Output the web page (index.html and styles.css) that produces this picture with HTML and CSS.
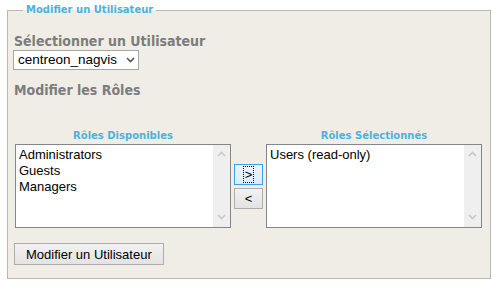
FILE: index.html
```html
<!DOCTYPE html>
<html lang="fr">

<head>
    <meta charset="UTF-8">
    <title>Modifier un Utilisateur</title>
    <link rel="stylesheet" href="styles.css">
</head>

<body>
    <fieldset class="panel">
        <legend>Modifier un Utilisateur</legend>

        <h3 class="section-title">Sélectionner un Utilisateur</h3>
        <div class="user-select">
            <span class="select-value">centreon_nagvis</span>
            <svg class="chevron" width="9" height="6" viewBox="0 0 9 6"><path d="M1 1 L4.5 4.5 L8 1" fill="none" stroke="#555" stroke-width="1.6"/></svg>
        </div>

        <h3 class="section-title roles-title">Modifier les Rôles</h3>

        <div class="roles">
            <div class="role-col">
                <div class="role-label">Rôles Disponibles</div>
                <div class="listbox">
                    <ul class="items">
                        <li>Administrators</li>
                        <li>Guests</li>
                        <li>Managers</li>
                    </ul>
                    <div class="scrollbar">
                        <svg width="9" height="6" viewBox="0 0 9 6"><path d="M1 5 L4.5 1.5 L8 5" fill="none" stroke="#c8c8c8" stroke-width="1.6"/></svg>
                        <svg width="9" height="6" viewBox="0 0 9 6"><path d="M1 1 L4.5 4.5 L8 1" fill="none" stroke="#c8c8c8" stroke-width="1.6"/></svg>
                    </div>
                </div>
            </div>

            <div class="move-buttons">
                <button class="move focused"><span>&gt;</span></button>
                <button class="move"><span>&lt;</span></button>
            </div>

            <div class="role-col">
                <div class="role-label">Rôles Sélectionnés</div>
                <div class="listbox">
                    <ul class="items">
                        <li>Users (read-only)</li>
                    </ul>
                    <div class="scrollbar">
                        <svg width="9" height="6" viewBox="0 0 9 6"><path d="M1 5 L4.5 1.5 L8 5" fill="none" stroke="#c8c8c8" stroke-width="1.6"/></svg>
                        <svg width="9" height="6" viewBox="0 0 9 6"><path d="M1 1 L4.5 4.5 L8 1" fill="none" stroke="#c8c8c8" stroke-width="1.6"/></svg>
                    </div>
                </div>
            </div>
        </div>

        <button class="submit">Modifier un Utilisateur</button>
    </fieldset>
</body>

</html>
```

FILE: styles.css
```css
* {
    margin: 0;
    padding: 0;
    box-sizing: border-box;
}

body {
    background: #fff;
    font-family: "Liberation Sans", Arial, sans-serif;
    font-size: 13px;
    color: #000;
}

.panel {
    margin: 4px 2px 0 7px;
    height: 275px;
    padding: 0 8px 0 6px;
    border: 1px solid #bdb9b1;
    background: #f0ede7;
}

.panel legend {
    margin-left: 9px;
    padding: 0 3px;
    font-family: "DejaVu Sans", sans-serif;
    font-weight: bold;
    font-size: 10px;
    line-height: 12px;
    color: #4cb2da;
}

.section-title {
    font-family: "DejaVu Sans Condensed", "DejaVu Sans", sans-serif;
    font-weight: bold;
    font-size: 14px;
    line-height: 17px;
    color: #7c7c7c;
    margin-top: 17px;
}

.roles-title {
    margin-top: 12px;
}

.user-select {
    display: flex;
    align-items: center;
    width: 126px;
    height: 20px;
    margin-left: -1px;
    padding: 0 0 0 4px;
    background: #fff;
    border: 1px solid #a6a6a6;
}

.select-value {
    width: 108px;
    font-size: 13.5px;
    line-height: 18px;
    white-space: nowrap;
}

.roles {
    display: flex;
    align-items: flex-end;
    gap: 3px;
    margin-top: 31px;
    margin-left: 1px;
}

.role-col {
    width: 216px;
}

.role-label {
    text-align: center;
    font-family: "DejaVu Sans", sans-serif;
    font-weight: bold;
    font-size: 10px;
    line-height: 12px;
    color: #4cb2da;
    margin-bottom: 2px;
}

.listbox {
    display: flex;
    height: 84px;
    background: #fff;
    border: 1px solid #82868c;
}

.items {
    flex: 1;
    list-style: none;
    padding: 2px 3px;
    line-height: 16px;
}

.scrollbar {
    width: 17px;
    background: #efefef;
    display: flex;
    flex-direction: column;
    justify-content: space-between;
    align-items: center;
    padding: 6px 0 7px;
}

.move-buttons {
    display: flex;
    flex-direction: column;
    gap: 3px;
    margin-bottom: 19px;
}

.move {
    width: 29px;
    height: 21px;
    font-family: "Liberation Sans", Arial, sans-serif;
    font-size: 13px;
    background: linear-gradient(#f2f2f2, #e3e3e3);
    border: 1px solid #adadad;
    color: #000;
}

.move.focused {
    border-color: #3c9ef0;
    background: linear-gradient(#ecf4fc, #dcecfc);
}

.move.focused span {
    display: inline-block;
    padding: 0 1px;
    outline: 1px dotted #000;
    line-height: 15px;
}

.submit {
    margin-top: 15px;
    margin-left: 0;
    height: 22px;
    padding: 0 11px;
    font-family: "Liberation Sans", Arial, sans-serif;
    font-size: 13px;
    color: #000;
    background: linear-gradient(#f2f2f2, #e3e3e3);
    border: 1px solid #adadad;
}
```
